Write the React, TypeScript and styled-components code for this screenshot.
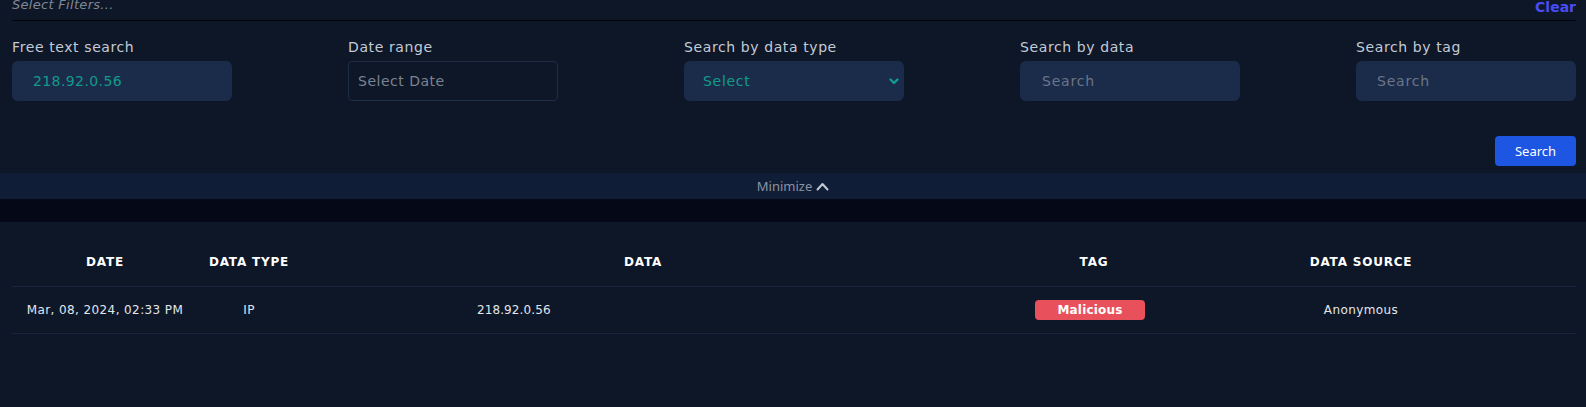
import React from "react";
import styled, { createGlobalStyle } from "styled-components";

const GlobalStyle = createGlobalStyle`
  html, body {
    margin: 0;
    padding: 0;
    background: #0e1727;
    font-family: "DejaVu Sans", "Noto Sans", sans-serif;
  }
  * {
    box-sizing: border-box;
  }
`;

interface Row {
  date: string;
  type: string;
  data: string;
  tag: string;
  source: string;
}

const rows: Row[] = [
  {
    date: "Mar, 08, 2024, 02:33 PM",
    type: "IP",
    data: "218.92.0.56",
    tag: "Malicious",
    source: "Anonymous",
  },
];

const ChevronDown = () => (
  <svg width="10" height="7" viewBox="0 0 10 7">
    <polyline
      points="1.5,1.5 5,5 8.5,1.5"
      fill="none"
      stroke="#139a8b"
      strokeWidth="2.4"
      strokeLinecap="round"
      strokeLinejoin="round"
    />
  </svg>
);

const ChevronUp = () => (
  <svg width="13" height="9" viewBox="0 0 13 9">
    <polyline
      points="1.5,7.5 6.5,2 11.5,7.5"
      fill="none"
      stroke="#c3c9d3"
      strokeWidth="2"
      strokeLinecap="round"
      strokeLinejoin="round"
    />
  </svg>
);

const App: React.FC = () => {
  return (
    <>
      <GlobalStyle />
      <Page>
        <FilterPanel>
          <TopBar>
            <FiltersHint>Select Filters...</FiltersHint>
            <ClearLink>Clear</ClearLink>
          </TopBar>
          <FilterRow>
            <FilterGroup>
              <Label>Free text search</Label>
              <TextInput defaultValue="218.92.0.56" pad={21} />
            </FilterGroup>
            <FilterGroup>
              <Label>Date range</Label>
              <DateInput placeholder="Select Date" />
            </FilterGroup>
            <FilterGroup>
              <Label>Search by data type</Label>
              <SelectBox>
                <span>Select</span>
                <ChevronDown />
              </SelectBox>
            </FilterGroup>
            <FilterGroup>
              <Label>Search by data</Label>
              <TextInput placeholder="Search" pad={22} />
            </FilterGroup>
            <FilterGroup>
              <Label>Search by tag</Label>
              <TextInput placeholder="Search" pad={21} />
            </FilterGroup>
          </FilterRow>
          <Actions>
            <SearchButton>Search</SearchButton>
          </Actions>
        </FilterPanel>
        <MinimizeBar>
          <span>Minimize</span>
          <ChevronUp />
        </MinimizeBar>
        <Divider />
        <TableSection>
          <HeadRow>
            <HeadCell>DATE</HeadCell>
            <HeadCell>DATA TYPE</HeadCell>
            <HeadCell>DATA</HeadCell>
            <HeadCell>TAG</HeadCell>
            <HeadCell>DATA SOURCE</HeadCell>
            <HeadCell />
          </HeadRow>
          {rows.map((r) => (
            <BodyRow key={r.date + r.data}>
              <Cell>{r.date}</Cell>
              <Cell>{r.type}</Cell>
              <DataCell>{r.data}</DataCell>
              <Cell>
                <TagBadge>{r.tag}</TagBadge>
              </Cell>
              <Cell>{r.source}</Cell>
              <Cell />
            </BodyRow>
          ))}
        </TableSection>
      </Page>
    </>
  );
};

const Page = styled.div`
  width: 1586px;
  height: 407px;
  overflow: hidden;
  background: #0e1727;
`;

const FilterPanel = styled.div`
  padding: 0 10px 7px 12px;
`;

const TopBar = styled.div`
  display: flex;
  justify-content: space-between;
  align-items: flex-end;
  height: 21px;
  padding-bottom: 9px;
  border-bottom: 1px solid #03050b;
`;

const FiltersHint = styled.span`
  font-size: 13px;
  line-height: 1;
  font-style: italic;
  letter-spacing: 0.3px;
  color: #7f8896;
`;

const ClearLink = styled.span`
  font-size: 14px;
  line-height: 1;
  font-weight: bold;
  color: #4a4cf4;
  margin-bottom: -3px;
  cursor: pointer;
`;

const FilterRow = styled.div`
  display: flex;
  justify-content: space-between;
  margin-top: 16px;
`;

const FilterGroup = styled.div`
  display: flex;
  flex-direction: column;
  gap: 4px;
  width: 220px;
`;

const Label = styled.label`
  font-size: 14px;
  line-height: 20px;
  letter-spacing: 0.6px;
  color: #c3cad6;
  white-space: nowrap;
`;

const TextInput = styled.input<{ pad: number }>`
  width: 100%;
  height: 40px;
  border: none;
  outline: none;
  border-radius: 6px;
  background: #1b2c4a;
  padding: 0 12px 0 ${({ pad }) => pad}px;
  font-family: inherit;
  font-size: 14px;
  letter-spacing: 0.4px;
  color: #139a8b;

  &::placeholder {
    color: #6a7587;
    letter-spacing: 0.8px;
  }
`;

const DateInput = styled.input`
  width: 210px;
  height: 40px;
  outline: none;
  border: 1px solid #1d2d4a;
  border-radius: 4px;
  background: transparent;
  padding: 0 9px;
  font-family: inherit;
  font-size: 14px;
  letter-spacing: 0.5px;
  color: #c6cdd8;

  &::placeholder {
    color: #7a8391;
  }
`;

const SelectBox = styled.div`
  display: flex;
  align-items: center;
  justify-content: space-between;
  height: 40px;
  border-radius: 6px;
  background: #1b2c4a;
  padding: 0 5px 0 19px;
  font-size: 14px;
  letter-spacing: 0.7px;
  color: #139a8b;
  cursor: pointer;
`;

const Actions = styled.div`
  display: flex;
  justify-content: flex-end;
  margin-top: 35px;
`;

const SearchButton = styled.button`
  width: 81px;
  height: 30px;
  border: none;
  border-radius: 4px;
  background: #1d56e2;
  color: #ffffff;
  font-family: "Noto Sans", "Open Sans", sans-serif;
  font-size: 13px;
  cursor: pointer;
`;

const MinimizeBar = styled.div`
  display: flex;
  align-items: center;
  justify-content: center;
  gap: 4px;
  height: 26px;
  background: #101d36;
  font-family: "Noto Sans", "Open Sans", sans-serif;
  font-size: 13px;
  color: #8a93a3;
  cursor: pointer;
`;

const Divider = styled.div`
  height: 23px;
  background: #050917;
`;

const TableSection = styled.div`
  padding: 16px 10px 0 12px;
`;

const columns = "186px 102px 686px 216px 318px 1fr";

const HeadRow = styled.div`
  display: grid;
  grid-template-columns: ${columns};
  align-items: center;
  height: 49px;
  border-bottom: 1px solid #1a2342;
`;

const HeadCell = styled.div`
  text-align: center;
  font-size: 12px;
  font-weight: bold;
  letter-spacing: 0.8px;
  color: #ffffff;
  white-space: nowrap;
`;

const BodyRow = styled.div`
  display: grid;
  grid-template-columns: ${columns};
  align-items: center;
  height: 47px;
  border-bottom: 1px solid #1a2342;
`;

const Cell = styled.div`
  display: flex;
  justify-content: center;
  font-size: 12px;
  letter-spacing: 0.4px;
  color: #e2e6ec;
  white-space: nowrap;
`;

const DataCell = styled(Cell)`
  justify-content: flex-start;
  padding-left: 177px;
  letter-spacing: 0.1px;
`;

const TagBadge = styled.span`
  display: inline-flex;
  align-items: center;
  justify-content: center;
  width: 110px;
  height: 20px;
  margin-right: 8px;
  border-radius: 4px;
  background: #e8515c;
  color: #ffffff;
  font-size: 12px;
  font-weight: 600;
  letter-spacing: 0.2px;
`;

export default App;
